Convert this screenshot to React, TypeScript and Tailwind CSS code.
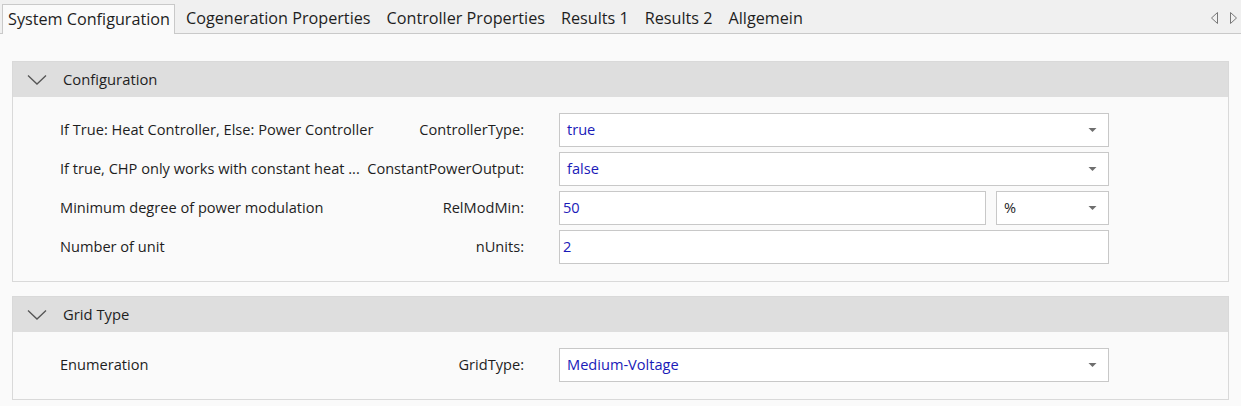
const tabs = ["System Configuration", "Cogeneration Properties", "Controller Properties", "Results 1", "Results 2", "Allgemein"];

function Chevron() {
    return (
        <svg width="20" height="12" viewBox="0 0 20 12" className="shrink-0">
            <path d="M1 1.5 L10 10 L19 1.5" fill="none" stroke="#555" strokeWidth="1.3" />
        </svg>
    );
}

function Arrow() {
    return (
        <svg width="9" height="6" viewBox="0 0 9 6" className="shrink-0">
            <path d="M0.5 1 L8.5 1 L4.5 5 Z" fill="#6e6e6e" />
        </svg>
    );
}

function Select({ value, className = "", textClass = "text-[#1a1ab8]" }: { value: string; className?: string; textClass?: string }) {
    return (
        <div className={"flex h-[34px] items-center justify-between border border-[#c8c8c8] bg-white pl-[7px] pr-[11px] " + className}>
            <span className={textClass}>{value}</span>
            <Arrow />
        </div>
    );
}

function TextBox({ value, className = "" }: { value: string; className?: string }) {
    return (
        <div className={"flex h-[34px] items-center border border-[#c8c8c8] bg-white pl-[3px] " + className}>
            <span className="text-[#1a1ab8]">{value}</span>
        </div>
    );
}

function PropRow({ desc, name, children }: { desc: string; name: string; children: React.ReactNode }) {
    return (
        <div className="relative flex h-[34px] items-center">
            <div className="w-[546px] shrink-0 pl-[47px] whitespace-nowrap">{desc}</div>
            {/* the property name sits over the end of a long description */}
            <div className="absolute right-[704px] bg-[#fafafa] pl-[3px] whitespace-nowrap">{name}</div>
            <div className="flex w-[550px] gap-[10px]">{children}</div>
        </div>
    );
}

function Group({ title, children, bodyClass }: { title: string; children: React.ReactNode; bodyClass: string }) {
    return (
        <div className="mx-[12px] border border-[#d9d9d9]">
            <div className="flex h-[35px] items-center gap-[16px] bg-[#dedede] pl-[14px]">
                <Chevron />
                <span className="text-[14.8px]">{title}</span>
            </div>
            <div className={bodyClass}>{children}</div>
        </div>
    );
}

export default function App() {
    return (
        <div className="h-[406px] w-[1241px] overflow-hidden bg-[#fafafa] text-[14.6px] text-[#1e1e1e]" style={{ fontFamily: '"Open Sans", "Noto Sans", sans-serif' }}>
            <div className="flex h-[34px] items-end border-b border-[#c9c9c9] bg-[#f0f0f0] pt-[4px]">
                <div className="flex h-[30px] items-end pl-[2px] text-[16.2px]">
                    {tabs.map((t, i) =>
                        i === 0 ? (
                            <div key={t} className="relative top-[1px] mr-[3px] flex h-[30px] items-center border border-b-0 border-[#c9c9c9] bg-[#fafafa] pl-[5px] pr-[4px]">
                                {t}
                            </div>
                        ) : (
                            <div key={t} className="flex h-[30px] items-center px-[8px]">
                                {t}
                            </div>
                        )
                    )}
                </div>
                <div className="ml-auto flex h-[30px] items-center gap-[12px] pr-[4px]">
                    <svg width="7" height="12" viewBox="0 0 7 12">
                        <path d="M6.5 0.5 L0.5 6 L6.5 11.5 Z" fill="none" stroke="#777" strokeWidth="1" />
                    </svg>
                    <svg width="7" height="12" viewBox="0 0 7 12">
                        <path d="M0.5 0.5 L6.5 6 L0.5 11.5 Z" fill="none" stroke="#777" strokeWidth="1" />
                    </svg>
                </div>
            </div>

            <div className="flex flex-col gap-[14px] pt-[27px]">
                <Group title="Configuration" bodyClass="flex flex-col gap-[5px] pt-[16px] pb-[17px]">
                    <PropRow desc="If True: Heat Controller, Else: Power Controller" name="ControllerType:">
                        <Select value="true" className="flex-1" />
                    </PropRow>
                    <PropRow desc="If true, CHP only works with constant heat ..." name="ConstantPowerOutput:">
                        <Select value="false" className="flex-1" />
                    </PropRow>
                    <PropRow desc="Minimum degree of power modulation" name="RelModMin:">
                        <TextBox value="50" className="flex-1" />
                        <Select value="%" className="w-[113px]" textClass="text-[#1e1e1e]" />
                    </PropRow>
                    <PropRow desc="Number of unit" name="nUnits:">
                        <TextBox value="2" className="flex-1" />
                    </PropRow>
                </Group>
                <Group title="Grid Type" bodyClass="flex flex-col pt-[16px] pb-[17px]">
                    <PropRow desc="Enumeration" name="GridType:">
                        <Select value="Medium-Voltage" className="flex-1" />
                    </PropRow>
                </Group>
            </div>
        </div>
    );
}
